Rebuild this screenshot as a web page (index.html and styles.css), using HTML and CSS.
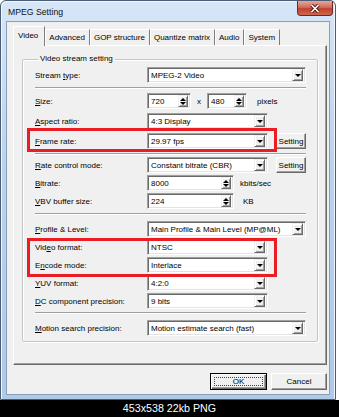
FILE: index.html
```html
<!DOCTYPE html>
<html lang="en">
<head>
    <meta charset="UTF-8">
    <meta name="viewport" content="width=device-width, initial-scale=1.0">
    <title>MPEG Setting</title>
    <link rel="stylesheet" href="styles.css">
</head>
<body>
<div class="screen">

    <div class="window">
        <div class="titlebar">
            <span class="title">MPEG Setting</span>
            <div class="close-btn">
                <svg width="12" height="9" viewBox="0 0 12 9">
                    <path d="M2.5 1 L9.5 8 M9.5 1 L2.5 8" stroke="#4a1208" stroke-width="3.4"/>
                    <path d="M2.5 1 L9.5 8 M9.5 1 L2.5 8" stroke="#fff" stroke-width="1.7"/>
                </svg>
            </div>
        </div>

        <div class="client">
            <div class="tabs">
                <div class="tab active">Video</div>
                <div class="tab">Advanced</div>
                <div class="tab">GOP structure</div>
                <div class="tab">Quantize matrix</div>
                <div class="tab">Audio</div>
                <div class="tab">System</div>
            </div>

            <div class="panel">
                <fieldset class="group">
                    <legend>Video stream setting</legend>

                    <div class="row">
                        <span class="lbl">Stream <u>t</u>ype:</span>
                        <div class="combo wide"><span class="val">MPEG-2 Video</span><span class="drop"></span></div>
                    </div>

                    <div class="sep sep-1"></div>

                    <div class="stack gap-4">
                        <div class="row">
                            <span class="lbl"><u>S</u>ize:</span>
                            <div class="spin spin-w"><span class="val">720</span><span class="arrows"><i class="up"></i><i class="down"></i></span></div>
                            <span class="times">x</span>
                            <div class="spin spin-h"><span class="val">480</span><span class="arrows"><i class="up"></i><i class="down"></i></span></div>
                            <span class="unit unit-px">pixels</span>
                        </div>
                        <div class="row">
                            <span class="lbl"><u>A</u>spect ratio:</span>
                            <div class="combo short"><span class="val">4:3 Display</span><span class="drop"></span></div>
                        </div>
                        <div class="row">
                            <span class="lbl"><u>F</u>rame rate:</span>
                            <div class="combo short"><span class="val">29.97 fps</span><span class="drop"></span></div>
                            <div class="btn">Setting</div>
                        </div>
                    </div>

                    <div class="sep sep-2"></div>

                    <div class="stack gap-2">
                        <div class="row">
                            <span class="lbl"><u>R</u>ate control mode:</span>
                            <div class="combo short"><span class="val">Constant bitrate (CBR)</span><span class="drop"></span></div>
                            <div class="btn">Setting</div>
                        </div>
                        <div class="row">
                            <span class="lbl"><u>B</u>itrate:</span>
                            <div class="spin spin-rate"><span class="val">8000</span><span class="arrows"><i class="up"></i><i class="down"></i></span></div>
                            <span class="unit">kbits/sec</span>
                        </div>
                        <div class="row">
                            <span class="lbl"><u>V</u>BV buffer size:</span>
                            <div class="spin spin-rate"><span class="val">224</span><span class="arrows"><i class="up"></i><i class="down"></i></span></div>
                            <span class="unit unit-kb">KB</span>
                        </div>
                    </div>

                    <div class="sep sep-3"></div>

                    <div class="stack gap-2">
                        <div class="row">
                            <span class="lbl"><u>P</u>rofile &amp; Level:</span>
                            <div class="combo wide"><span class="val">Main Profile &amp; Main Level (MP@ML)</span><span class="drop"></span></div>
                        </div>
                        <div class="row">
                            <span class="lbl">Vid<u>e</u>o format:</span>
                            <div class="combo short"><span class="val">NTSC</span><span class="drop"></span></div>
                        </div>
                        <div class="row">
                            <span class="lbl">E<u>n</u>code mode:</span>
                            <div class="combo short"><span class="val">Interlace</span><span class="drop"></span></div>
                        </div>
                        <div class="row">
                            <span class="lbl"><u>Y</u>UV format:</span>
                            <div class="combo short"><span class="val">4:2:0</span><span class="drop"></span></div>
                        </div>
                        <div class="row">
                            <span class="lbl"><u>D</u>C component precision:</span>
                            <div class="combo short"><span class="val">9 bits</span><span class="drop"></span></div>
                        </div>
                    </div>

                    <div class="sep sep-4"></div>

                    <div class="row">
                        <span class="lbl"><u>M</u>otion search precision:</span>
                        <div class="combo wide"><span class="val">Motion estimate search (fast)</span><span class="drop"></span></div>
                    </div>
                </fieldset>
            </div>

            <div class="actions">
                <div class="push default"><span class="focus">OK</span></div>
                <div class="push">Cancel</div>
            </div>
        </div>
    </div>

    <div class="caption">453x538 22kb PNG</div>

    <!-- red highlight boxes drawn over the dialog -->
    <div class="mark mark-frame"></div>
    <div class="mark mark-format"></div>

</div>
</body>
</html>
```

FILE: styles.css
```css
body {
    margin: 0;
    background: #fff;
    font-family: "Liberation Sans", Arial, sans-serif;
    color: #000;
}

.screen {
    position: relative;
    width: 339px;
    height: 417px;
    display: flex;
    flex-direction: column;
    overflow: hidden;
}

/* window frame */
.window {
    width: 336px;
    height: 400px;
    box-sizing: border-box;
    border: 1px solid #4b5d74;
    border-radius: 6px 6px 0 0;
    background: linear-gradient(#d6e6f7, #bcd3ee 40%, #afc9e8);
    box-shadow: inset 1px 1px 0 #eef5fc, inset -1px 0 0 #eef5fc;
    padding: 0 6px 5px;
    display: flex;
    flex-direction: column;
}

.titlebar {
    height: 21px;
    flex: none;
    display: flex;
    justify-content: space-between;
    align-items: flex-start;
}

.title {
    font-size: 8.7px;
    margin: 6px 0 0 1px;
    color: #111;
}

.close-btn {
    width: 36px;
    height: 15px;
    margin-right: -4px;
    box-sizing: border-box;
    border: 1px solid #6b2a20;
    border-top: none;
    border-radius: 0 0 4px 4px;
    background: linear-gradient(#e4a89c, #d36b58 45%, #c0412b 55%, #d0664f);
    display: flex;
    align-items: center;
    justify-content: center;
}

/* dialog client area */
.client {
    flex: 1;
    background: #f0f0f0;
    box-shadow: 0 0 0 1px #8c9fb8;
    padding: 5px 2px 4px 6px;
    display: flex;
    flex-direction: column;
    font-size: 8px;
}

.tabs {
    height: 18px;
    display: flex;
    align-items: flex-end;
    flex: none;
}

.tab {
    height: 16px;
    box-sizing: border-box;
    padding: 0 4px 0 3px;
    line-height: 15px;
    border-top: 1px solid #fff;
    border-left: 1px solid #fff;
    border-right: 1px solid #7d7d7d;
    white-space: nowrap;
}

.tab.active {
    position: relative;
    z-index: 1;
    height: 20px;
    margin-bottom: -1px;
    padding: 0 6px 0 4px;
    line-height: 18px;
    background: #f0f0f0;
}

.panel {
    height: 320px;
    box-sizing: border-box;
    border: 1px solid;
    border-color: #fff #696969 #696969 #fff;
    box-shadow: inset -1px -1px 0 #a0a0a0;
    padding: 8px 8px 0;
}

.group {
    margin: 0;
    padding: 3px 11px 5px 12px;
    border: 1px solid #c6c6c6;
    border-radius: 2px;
    box-shadow: inset 1px 1px 0 #fff, 1px 1px 0 #fff;
    min-width: 0;
}

.group legend {
    margin-left: 3px;
    padding: 0 2px;
    line-height: 10px;
}

.stack {
    display: flex;
    flex-direction: column;
}

.gap-4 { gap: 4px; }
.gap-2 { gap: 2px; }

.row {
    height: 16px;
    display: flex;
    align-items: center;
    white-space: nowrap;
}

.lbl {
    width: 112px;
    flex: none;
}

.sep {
    border-top: 1px solid #a0a0a0;
    border-bottom: 1px solid #fff;
}

.sep-1 { margin: 4px 0 4px; }
.sep-2 { margin: 4px 0 2px; }
.sep-3 { margin: 4px 0 6px; }
.sep-4 { margin: 3px 0 6px; }

/* sunken edit / combo */
.combo,
.spin {
    height: 16px;
    box-sizing: border-box;
    background: #fff;
    border: 1px solid;
    border-color: #a0a0a0 #fff #fff #a0a0a0;
    box-shadow: inset 1px 1px 0 #696969, inset -1px -1px 0 #e3e3e3;
    padding: 2px 2px 2px 3px;
    display: flex;
    align-items: center;
    justify-content: space-between;
    flex: none;
    overflow: hidden;
}

.combo.wide { width: 159px; }
.combo.short { width: 121px; }

.drop,
.arrows {
    width: 11px;
    height: 12px;
    box-sizing: border-box;
    background: #f0f0f0;
    border: 1px solid;
    border-color: #f0f0f0 #696969 #696969 #f0f0f0;
    box-shadow: inset 1px 1px 0 #fff, inset -1px -1px 0 #a0a0a0;
    display: flex;
    align-items: center;
    justify-content: center;
    flex: none;
}

.drop::after {
    content: "";
    border-left: 3px solid transparent;
    border-right: 3px solid transparent;
    border-top: 3px solid #000;
}

.arrows {
    width: 10px;
    flex-direction: column;
    gap: 1px;
}

.arrows i {
    display: block;
    border-left: 3px solid transparent;
    border-right: 3px solid transparent;
}

.arrows .up { border-bottom: 3px solid #000; }
.arrows .down { border-top: 3px solid #000; }

.spin-w { width: 44px; }
.spin-h { width: 40px; }
.spin-rate { width: 87px; }

.times {
    margin: 0 6px 0 6px;
}

.unit { margin-left: 6px; }
.unit-px { margin-left: 10px; }
.unit-kb { margin-left: 9px; }

/* raised buttons */
.btn,
.push {
    box-sizing: border-box;
    background: #f0f0f0;
    border: 1px solid;
    border-color: #fff #696969 #696969 #fff;
    box-shadow: inset -1px -1px 0 #a0a0a0;
    display: flex;
    align-items: center;
    justify-content: center;
    flex: none;
}

.btn {
    width: 30px;
    height: 16px;
    margin-left: 8px;
}

.actions {
    margin-top: 8px;
    display: flex;
    justify-content: flex-end;
    gap: 4px;
}

.push {
    width: 56px;
    height: 17px;
}

.push.default {
    width: 57px;
    border: 1px solid #000;
    box-shadow: inset 1px 1px 0 #fff, inset -1px -1px 0 #696969, inset -2px -2px 0 #a0a0a0;
    padding: 3px;
}

.push .focus {
    flex: 1;
    align-self: stretch;
    border: 1px dotted #444;
    display: flex;
    align-items: center;
    justify-content: center;
}

/* image caption strip */
.caption {
    height: 17px;
    background: #000;
    color: #fff;
    font-size: 10.7px;
    line-height: 17px;
    text-align: center;
}

/* red annotation boxes */
.mark {
    position: absolute;
    left: 27px;
    width: 250px;
    box-sizing: border-box;
    border: 3px solid #ec1c24;
}

.mark-frame {
    top: 128px;
    height: 24px;
}

.mark-format {
    top: 238px;
    height: 39px;
}
```
